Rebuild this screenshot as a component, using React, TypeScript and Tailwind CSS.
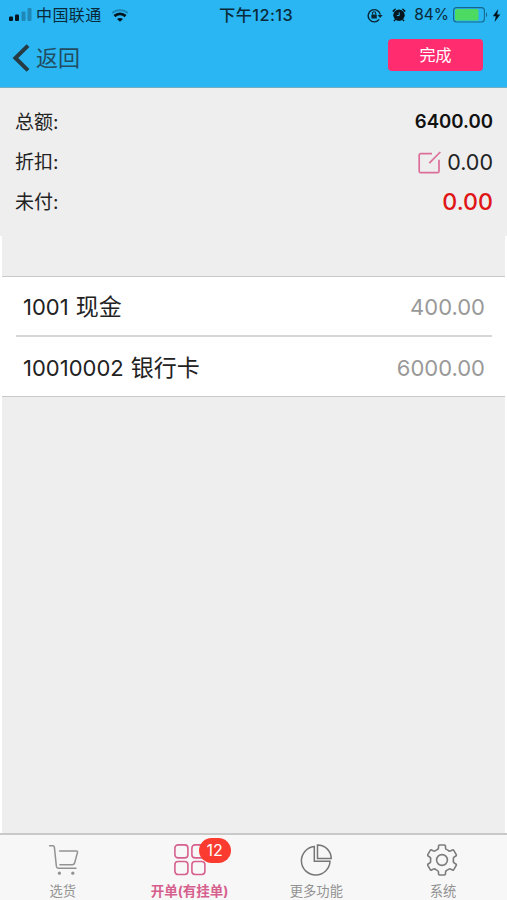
import React, { useState } from 'react';

interface Account {
  code: string;
  name: string;
  amount: number;
}

interface Tab {
  key: string;
  label: string;
  icon: React.ReactNode;
  badge?: number;
}

const accounts: Account[] = [
  { code: '1001', name: '现金', amount: 400 },
  { code: '10010002', name: '银行卡', amount: 6000 },
];

const SignalIcon = () => (
  <svg width="23" height="14" viewBox="0 0 23 14">
    <rect x="0" y="8.5" width="4" height="4.5" rx="1" fill="#05151d" />
    <rect x="6" y="6.5" width="4" height="6.5" rx="1" fill="#05151d" />
    <rect x="12.5" y="3.5" width="4" height="9.5" rx="1" fill="#2088b6" />
    <rect x="18.5" y="0" width="4" height="13" rx="1" fill="#2088b6" />
  </svg>
);

const WifiIcon = () => (
  <svg width="18" height="13" viewBox="0 0 18 13" fill="none">
    <path d="M1.2 4.2C5.6.2 12.4.2 16.8 4.2" stroke="#1c86b5" strokeWidth="1.8" />
    <path d="M3.4 7.1c3.2-2.9 8-2.9 11.2 0" stroke="#05151d" strokeWidth="2.8" />
    <path d="M6 10c1.7-1.5 4.3-1.5 6 0L9 12.8z" fill="#05151d" />
  </svg>
);

const RotationLockIcon = () => (
  <svg width="16" height="15" viewBox="0 0 16 15" fill="none" stroke="#0a2533">
    <path d="M12.2 11.4A6.1 6.1 0 1 1 13.3 6.6" strokeWidth="1.4" />
    <path d="M10.6 6.9h5l-2.5 3.2z" fill="#0a2533" stroke="none" />
    <rect x="4.4" y="6.5" width="5.4" height="4.1" rx=".5" fill="#0a2533" stroke="none" />
    <path d="M5.5 6.6V5.3a1.6 1.6 0 0 1 3.2 0v1.3" strokeWidth="1.1" />
  </svg>
);

const AlarmIcon = () => (
  <svg width="14" height="14" viewBox="0 0 14 14" fill="none">
    <circle cx="7" cy="7.3" r="5.7" fill="#05151d" />
    <path d="M1.2 3.1 3.2 1.3M12.8 3.1 10.8 1.3" stroke="#05151d" strokeWidth="1.5" strokeLinecap="round" />
    <path d="m3 11.7-1 1.3M11 11.7l1 1.3" stroke="#05151d" strokeWidth="1.5" />
    <path d="M7.2 4.4v3.2H4.8" stroke="#29b6f3" strokeWidth="1" />
  </svg>
);

const BatteryIcon = () => (
  <svg width="35" height="16" viewBox="0 0 35 16" fill="none">
    <rect x=".6" y=".6" width="30.8" height="14.4" rx="3" stroke="#17688c" strokeWidth="1.1" />
    <rect x="2" y="2" width="23.5" height="11.6" rx="1.6" fill="#4cda63" />
    <path d="M33 5.3c1.5.8 1.5 4.2 0 5z" fill="#17688c" />
  </svg>
);

const BoltIcon = () => (
  <svg width="9" height="13" viewBox="0 0 9 13">
    <path d="M6.2 0 .8 7.2h3L2.6 13 8.3 5.4H5.2z" fill="#05151d" />
  </svg>
);

const EditIcon = () => (
  <svg width="23" height="23" viewBox="0 0 23 23" fill="none" stroke="#dc6f99" strokeWidth="1.7">
    <path d="M14 2.6H2.6a1.4 1.4 0 0 0-1.4 1.4v16.2a1.4 1.4 0 0 0 1.4 1.4h17a1.4 1.4 0 0 0 1.4-1.4V8.8" />
    <path d="M11.3 12.2 22.3 1" />
  </svg>
);

const CartIcon = () => (
  <svg width="32" height="32" viewBox="0 0 32 32" fill="none" stroke="#929292" strokeWidth="1.5" strokeLinecap="round" strokeLinejoin="round">
    <path d="M2.6 1.8h3.2q1.4 0 1.6 1.5l2 19.2q.2 1.8 2 1.8h17.6" />
    <path d="M12.6 7h16.8q1.4 0 1.1 1.4l-2.8 10.3q-.5 2-2.5 2H12.9" />
    <circle cx="12.4" cy="29.2" r="1.6" fill="#929292" stroke="none" />
    <circle cx="25.8" cy="29.2" r="1.6" fill="#929292" stroke="none" />
  </svg>
);

const GridIcon = () => (
  <svg width="32" height="32" viewBox="0 0 32 32" fill="none" stroke="#d6608d" strokeWidth="1.6">
    <rect x=".9" y=".9" width="13" height="13" rx="3.2" />
    <rect x="17.9" y=".9" width="13" height="13" rx="3.2" />
    <rect x=".9" y="17.5" width="13" height="13" rx="3.2" />
    <rect x="17.9" y="17.5" width="13" height="13" rx="3.2" />
  </svg>
);

const PieIcon = () => (
  <svg width="32" height="32" viewBox="0 0 32 32" fill="none" stroke="#777" strokeWidth="1.5">
    <path d="M14.3 2.5A14.3 14.3 0 1 0 30 17.3H14.3z" />
    <path d="M17.5.9v13.6h13.7A13.7 13.7 0 0 0 17.5.9z" />
  </svg>
);

// each tooth is the same stroke, turned by 60 degrees
const GearIcon = () => (
  <svg width="32" height="32" viewBox="-15 -16 32 32" fill="none" stroke="#7c7c7c" strokeWidth="1.6" strokeLinecap="round" strokeLinejoin="round">
    {[0, 60, 120, 180, 240, 300].map((deg) => (
      <path key={deg} transform={`rotate(${deg})`} d="M-4.4-10.6q.9-.5.9-1.5v-1.9q0-1 1-1h5q1 0 1 1v1.9q0 1 .9 1.5 1.4.7 2.6 1.5" />
    ))}
    <circle r="5.4" />
  </svg>
);

const tabs: Tab[] = [
  { key: 'goods', label: '选货', icon: <CartIcon /> },
  { key: 'order', label: '开单(有挂单)', icon: <GridIcon />, badge: 12 },
  { key: 'more', label: '更多功能', icon: <PieIcon /> },
  { key: 'system', label: '系统', icon: <GearIcon /> },
];

const App: React.FC = () => {
  const [activeTab, setActiveTab] = useState('order');

  return (
    <div className="flex flex-col w-full h-screen bg-white overflow-hidden font-[Inter,'Noto_Sans_CJK_SC',sans-serif]">
      <header className="shrink-0 h-[88px] bg-[#29b6f3] border-b border-[#70adc6]">
        {/* Status bar */}
        <div className="grid grid-cols-[200px_1fr_200px] items-center h-[30px] text-[#0a2a3a]">
          <div className="flex items-center pl-[9px]">
            <SignalIcon />
            <span className="ml-[4px] text-[16px] tracking-[0.4px]">中国联通</span>
            <span className="ml-[9px]"><WifiIcon /></span>
          </div>
          <div className="text-center font-medium text-[16.3px] leading-[26px] tracking-[0.4px] pl-[5px] whitespace-nowrap">下午12:13</div>
          <div className="flex items-center justify-end pr-[6px]">
            <RotationLockIcon />
            <span className="ml-[9px]"><AlarmIcon /></span>
            <span className="ml-[8px] mr-[4px] text-[15.5px]">84%</span>
            <BatteryIcon />
            <span className="ml-[4px]"><BoltIcon /></span>
          </div>
        </div>
        {/* Nav bar */}
        <div className="flex items-start justify-between pl-3 pr-6">
          <button className="flex items-center h-[56px] text-[22px] text-[#224d60]">
            <svg width="18" height="28" viewBox="0 0 18 28" fill="none" stroke="#273b45" strokeWidth="4">
              <path d="M16 1.6 3.4 14 16 26.4" />
            </svg>
            <span className="ml-[6px]">返回</span>
          </button>
          <button className="mt-[9px] w-[95px] h-[32px] rounded-[4px] bg-[#ff2d6f] text-white text-[16px]">完成</button>
        </div>
      </header>

      <section className="shrink-0 h-[148px] pt-[14px] px-[14px] bg-[#eee] text-[19px] text-[#222]">
        <div className="flex items-center justify-between h-10">
          <span className="pt-[2px] pl-px">总额:</span>
          <span className="font-semibold text-[18.6px] text-[#111]">6400.00</span>
        </div>
        <div className="flex items-center justify-between h-[41px]">
          <span className="pt-[2px] pl-px">折扣:</span>
          <span className="flex items-center gap-[6px] text-[21.5px]">
            <EditIcon />
            0.00
          </span>
        </div>
        <div className="flex items-center justify-between h-10">
          <span className="pt-px pl-px">未付:</span>
          <span className="pb-px text-[23.2px] font-medium text-[#e01515]">0.00</span>
        </div>
      </section>

      <main className="flex-1 mx-[2px] bg-[#eee]">
        <ul className="mt-[40px] bg-white border-y border-[#c8c8c8]">
          {accounts.map((item, index) => (
            <li key={item.code} className="pl-[14px] pr-[13px]">
              <div className={`flex items-center justify-between pl-[7px] pr-[7px] pt-[2px] ${index > 0 ? 'h-[61px] border-t-2 border-[#d6d6d6]' : 'h-[58px]'}`}>
                <span className="flex items-center gap-[7px] pt-px text-[22px] text-[#222]">
                  <span>{item.code}</span>
                  <span className="text-[23px]">{item.name}</span>
                </span>
                <span className="text-[22px] pt-px text-[#999]">{item.amount.toFixed(2)}</span>
              </div>
            </li>
          ))}
        </ul>
      </main>

      <nav className="shrink-0 grid grid-cols-4 h-[67px] bg-[#f7f7f7] border-t-2 border-[#c9c9c9]">
        {tabs.map((tab) => (
          <button
            key={tab.key}
            onClick={() => setActiveTab(tab.key)}
            className={`flex flex-col items-center pt-[9px] pr-px ${tab.key === activeTab ? 'font-bold text-[13.5px] text-[#d6608d]' : 'text-[13.3px] text-[#929292]'}`}
          >
            <span className="relative flex items-center justify-center w-8 h-8">
              <span className="shrink-0">{tab.icon}</span>
              {tab.badge && (
                <span className="absolute left-[25px] -top-[6px] w-8 h-[25px] rounded-full bg-[#fb3b30] text-white text-[16px] leading-[25px] font-normal">
                  {tab.badge}
                </span>
              )}
            </span>
            <span className="mt-[6px] leading-[18px] whitespace-nowrap">{tab.label}</span>
          </button>
        ))}
      </nav>
    </div>
  );
};

export default App;
